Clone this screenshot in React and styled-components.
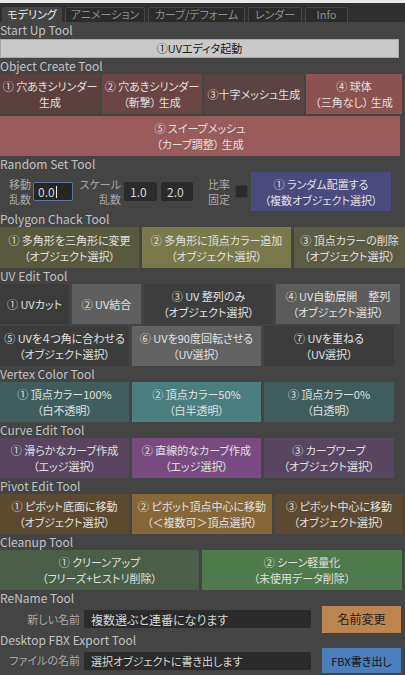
import React from 'react';
import styled, { createGlobalStyle } from 'styled-components';

const GlobalStyle = createGlobalStyle`
  html, body { margin: 0; padding: 0; background: #444444; }
  body {
    font-family: "Noto Sans CJK JP", "Noto Sans", sans-serif;
    font-size: 11px;
    color: #c4c4c4;
    font-feature-settings: "palt";
  }
  * { box-sizing: border-box; }
`;

const Window = styled.div`
  width: 405px;
  height: 675px;
  overflow: hidden;
  background: #444444;
  display: flex;
  flex-direction: column;
`;

const TopStrip = styled.div`
  flex: none;
  height: 3px;
  background: #e9e9e9;
`;

const TabBar = styled.div`
  flex: none;
  height: 19px;
  background: #2f2f2f;
  display: flex;
  align-items: flex-end;
  gap: 3px;
  padding-left: 2px;
`;

const Tab = styled.div`
  height: 15px;
  width: ${p => p.$w}px;
  border: 1px solid ${p => (p.$active ? '#444444' : '#474747')};
  border-bottom: none;
  border-radius: 2px 2px 0 0;
  background: ${p => (p.$active ? '#444444' : '#2b2b2b')};
  color: ${p => (p.$active ? '#f0f0f0' : '#8e8e8e')};
  font-size: 11px;
  line-height: 13px;
  padding-top: 0;
  text-align: center;
  white-space: nowrap;
  overflow: hidden;
`;

const SectionLabel = styled.div`
  flex: none;
  height: 16px;
  line-height: 16px;
  padding-left: 0;
  font-size: 12px;
  color: #c2c2c2;
  white-space: nowrap;
`;

const Row = styled.div`
  flex: none;
  display: grid;
  grid-template-columns: ${p => p.$cols};
  column-gap: ${p => p.$gap ?? 3}px;
  height: ${p => p.$h ?? 40}px;
  margin-bottom: ${p => p.$mb ?? 0}px;
`;

const ToolButton = styled.button`
  margin: 0;
  padding: 0;
  border: none;
  background: ${p => p.$bg};
  color: ${p => p.$fg ?? '#e0e0e0'};
  font-family: inherit;
  font-size: 11px;
  font-feature-settings: "palt";
  line-height: 16px;
  white-space: pre;
  text-align: center;
  overflow: hidden;
  cursor: pointer;
`;

const StartRow = styled.div`
  flex: none;
  height: 20px;
  padding-top: 1px;
  display: flex;
`;

const StartButton = styled.button`
  width: 399px;
  height: 19px;
  margin: 0;
  padding: 0;
  border: 1px solid #a9a9a9;
  background: #c9c9c9;
  color: #161616;
  font-family: inherit;
  font-size: 11px;
  font-feature-settings: "palt";
  line-height: 17px;
`;

const FormRow = styled.div`
  flex: none;
  height: ${p => p.$h}px;
  display: flex;
  align-items: center;
`;

const FieldLabel = styled.div`
  flex: none;
  width: ${p => p.$w}px;
  margin-left: ${p => p.$ml ?? 0}px;
  text-align: right;
  color: #a9a9a9;
  font-size: 11px;
  line-height: 15px;
  white-space: pre;
`;

const Field = styled.div`
  flex: none;
  width: ${p => p.$w}px;
  height: ${p => p.$h ?? 19}px;
  margin-left: ${p => p.$ml ?? 0}px;
  background: ${p => (p.$focus ? '#262626' : '#2b2b2b')};
  border: 1px solid ${p => (p.$focus ? '#5d7996' : '#2b2b2b')};
  border-radius: 2px;
  color: #d6d6d6;
  font-size: ${p => p.$fs ?? 11}px;
  padding-left: ${p => p.$pl ?? 4}px;
  white-space: nowrap;
  overflow: hidden;
  display: flex;
  align-items: center;
`;

const Caret = styled.span`
  display: inline-block;
  width: 1px;
  height: 12px;
  background: #f0f0f0;
  margin-left: 1px;
`;

const CheckBox = styled.div`
  flex: none;
  width: 13px;
  height: 13px;
  margin-left: ${p => p.$ml}px;
  background: #2b2b2b;
  border: 1px solid #3a3a3a;
  border-radius: 2px;
`;

const ActionButton = styled.button`
  flex: none;
  width: ${p => p.$w}px;
  height: ${p => p.$h}px;
  margin: 0 0 0 ${p => p.$ml ?? 0}px;
  padding: 0;
  border: none;
  background: ${p => p.$bg};
  color: ${p => p.$fg ?? '#e0e0e0'};
  font-family: inherit;
  font-size: ${p => p.$fs ?? 11}px;
  font-feature-settings: "palt";
  line-height: 16px;
  white-space: pre;
  text-align: center;
`;

const objectCreate = {
  label: 'Object Create Tool',
  rows: [
    {
      cols: '100px 100px 100px 96px',
      gap: 2,
      mb: 2,
      items: [
        ['① 穴あきシリンダー\n生成', '#5c3f3f'],
        ['② 穴あきシリンダー\n（斬撃） 生成', '#6b4545'],
        ['③十字メッシュ生成', '#5b4343'],
        ['④ 球体\n（三角なし） 生成', '#8c5252'],
      ],
    },
    { cols: '400px', items: [['⑤ スイープメッシュ\n（カーブ調整） 生成', '#9a5b5b']] },
  ],
};

const polygon = {
  label: 'Polygon Chack Tool',
  rows: [
    {
      cols: '139px 149px 111px',
      h: 41,
      items: [
        ['① 多角形を三角形に変更\n（オブジェクト選択）', '#59593e'],
        ['② 多角形に頂点カラー追加\n（オブジェクト選択）', '#7a794b'],
        ['③ 頂点カラーの削除\n（オブジェクト選択）', '#5c5b44'],
      ],
    },
  ],
};

const rest = [
  {
    label: 'UV Edit Tool',
    rows: [
      {
        cols: '69px 69px 129px 124px',
        mb: 2,
        items: [
          ['① UVカット', '#3b3b3b'],
          ['② UV結合', '#5f5f5f'],
          ['③ UV 整列のみ\n（オブジェクト選択）', '#3d3d3d'],
          ['④ UV自動展開　整列\n（オブジェクト選択）', '#5c5c5c'],
        ],
      },
      {
        cols: '129px 129px 130px',
        items: [
          ['⑤ UVを４つ角に合わせる\n（オブジェクト選択）', '#3c3c3c'],
          ['⑥ UVを90度回転させる\n（UV選択）', '#626262'],
          ['⑦ UVを重ねる\n（UV選択）', '#3c3c3c'],
        ],
      },
    ],
  },
  {
    label: 'Vertex Color Tool',
    rows: [
      {
        cols: '129px 129px 130px',
        items: [
          ['① 頂点カラー100%\n（白不透明）', '#405e5e'],
          ['② 頂点カラー50%\n（白半透明）', '#4a7e7f'],
          ['③ 頂点カラー0%\n（白透明）', '#405d5d'],
        ],
      },
    ],
  },
  {
    label: 'Curve Edit Tool',
    rows: [
      {
        cols: '129px 129px 130px',
        items: [
          ['① 滑らかなカーブ作成\n（エッジ選択）', '#58445e'],
          ['② 直線的なカーブ作成\n（エッジ選択）', '#784a80'],
          ['③ カーブワープ\n（オブジェクト選択）', '#58455f'],
        ],
      },
    ],
  },
  {
    label: 'Pivot Edit Tool',
    rows: [
      {
        cols: '129px 140px 128px',
        items: [
          ['① ピボット底面に移動\n（オブジェクト選択）', '#5d4930'],
          ['② ピボット頂点中心に移動\n（＜複数可＞頂点選択）', '#87673a'],
          ['③ ピボット中心に移動\n（オブジェクト選択）', '#5d4931'],
        ],
      },
    ],
  },
  {
    label: 'Cleanup Tool',
    rows: [
      {
        cols: '199px 200px',
        items: [
          ['① クリーンアップ\n（フリーズ+ヒストリ削除）', '#4a5e48'],
          ['② シーン軽量化\n（未使用データ削除）', '#4e7a4c'],
        ],
      },
    ],
  },
];

const tabs = [
  ['モデリング', 60, true],
  ['アニメーション', 80],
  ['カーブ/デフォーム', 97],
  ['レンダー', 54],
  ['Info', 43],
];

function Section({ label, rows }) {
  return (
    <>
      <SectionLabel>{label}</SectionLabel>
      {rows.map((r, i) => (
        <Row key={i} $cols={r.cols} $gap={r.gap} $h={r.h} $mb={r.mb}>
          {r.items.map(([text, bg], j) => (
            <ToolButton key={j} $bg={bg}>
              {text}
            </ToolButton>
          ))}
        </Row>
      ))}
    </>
  );
}

export default function App() {
  return (
    <>
      <GlobalStyle />
      <Window>
        <TopStrip />
        <TabBar>
          {tabs.map(([t, w, a]) => (
            <Tab key={t} $w={w} $active={a}>
              {t}
            </Tab>
          ))}
        </TabBar>

        <SectionLabel>Start Up Tool</SectionLabel>
        <StartRow>
          <StartButton>①UVエディタ起動</StartButton>
        </StartRow>

        <Section {...objectCreate} />

        <SectionLabel>Random Set Tool</SectionLabel>
        <FormRow $h={39}>
          <FieldLabel $w={31}>{'移動\n乱数'}</FieldLabel>
          <Field $w={40} $ml={2} $focus $pl={4} $fs={12}>
            0.0
            <Caret />
          </Field>
          <FieldLabel $w={48}>{'スケール\n乱数'}</FieldLabel>
          <Field $w={33} $ml={3} $pl={5} $fs={12}>1.0</Field>
          <Field $w={32} $ml={4} $pl={5} $fs={12}>2.0</Field>
          <FieldLabel $w={37}>{'比率\n固定'}</FieldLabel>
          <CheckBox $ml={5} />
          <ActionButton $w={140} $h={39} $ml={3} $bg="#4b4a7e">
            {'① ランダム配置する\n（複数オブジェクト選択）'}
          </ActionButton>
        </FormRow>

        <Section {...polygon} />

        {rest.map(s => (
          <Section key={s.label} {...s} />
        ))}

        <SectionLabel>ReName Tool</SectionLabel>
        <FormRow $h={26}>
          <FieldLabel $w={80}>新しい名前</FieldLabel>
          <Field $w={227} $h={18} $ml={4} $pl={6} $fs={12}>複数選ぶと連番になります</Field>
          <ActionButton $w={79} $h={27} $ml={11} $bg="#bd8450" $fg="#1e1e1e" $fs={12}>
            名前変更
          </ActionButton>
        </FormRow>

        <SectionLabel>Desktop FBX Export Tool</SectionLabel>
        <FormRow $h={25}>
          <FieldLabel $w={80}>ファイルの名前</FieldLabel>
          <Field $w={227} $h={18} $ml={4} $pl={6} $fs={11}>選択オブジェクトに書き出します</Field>
          <ActionButton $w={79} $h={25} $ml={11} $bg="#4a7ebd" $fg="#141414" $fs={11}>
            FBX書き出し
          </ActionButton>
        </FormRow>
      </Window>
    </>
  );
}
